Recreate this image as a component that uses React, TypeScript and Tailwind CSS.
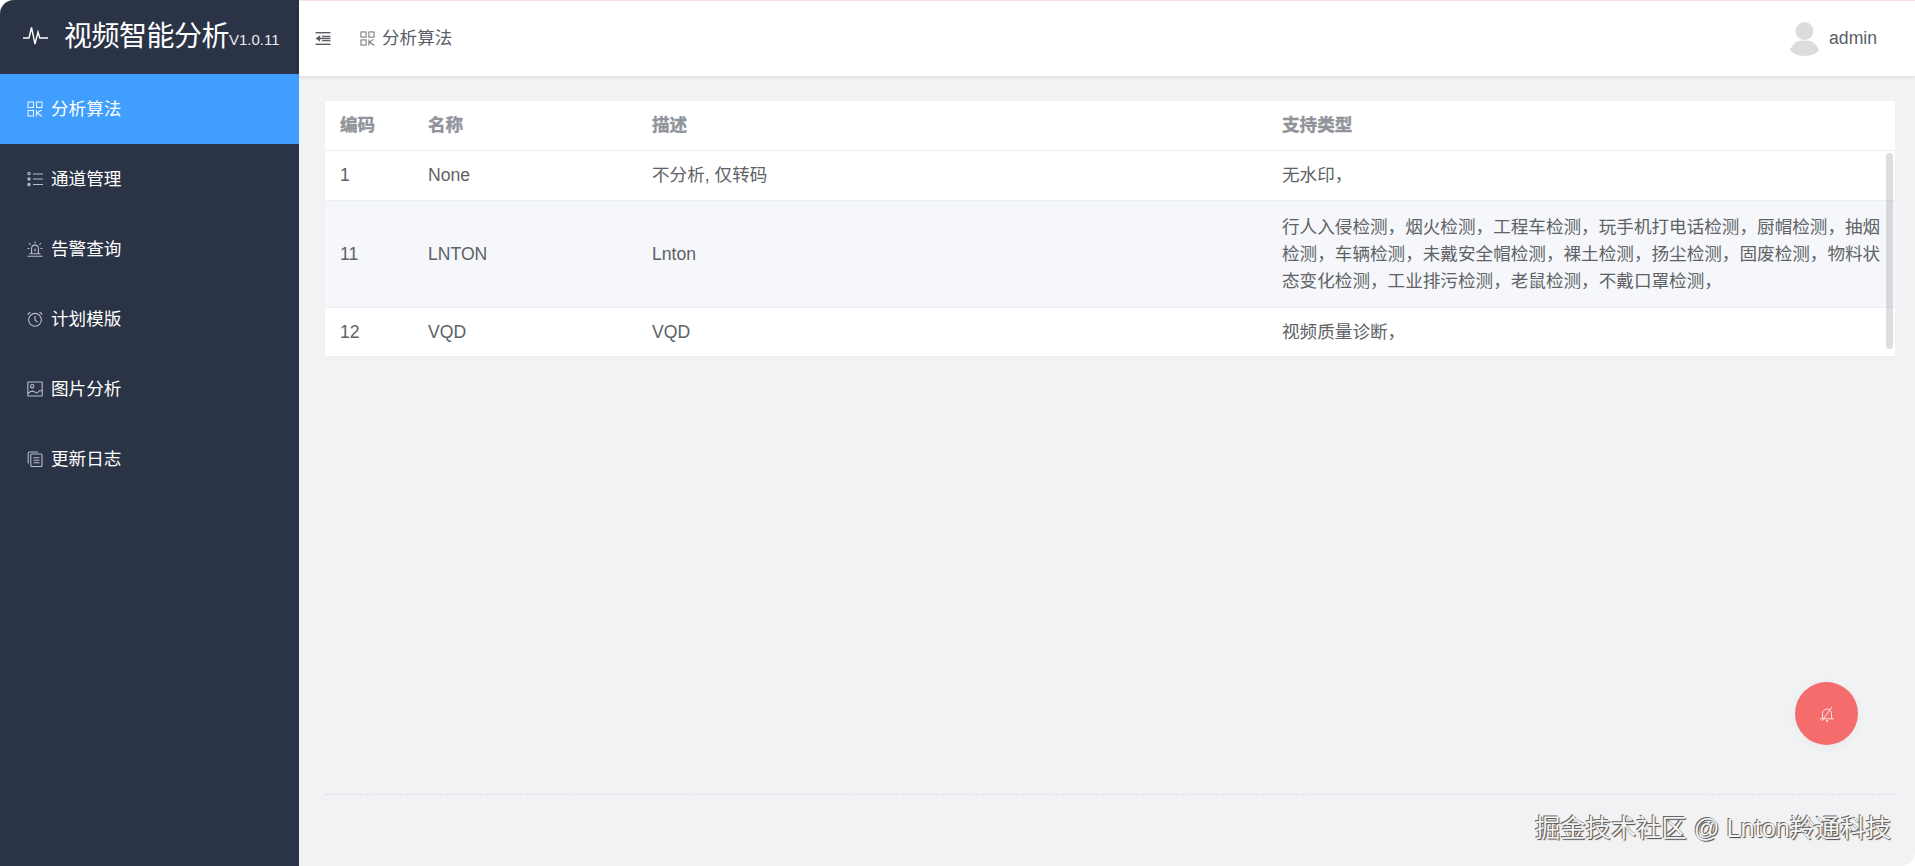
import type { ReactNode } from "react";

const font = "font-['Liberation_Sans','Noto_Sans_CJK_SC',sans-serif]";

function GridIcon({ className }: { className?: string }) {
  return (
    <svg viewBox="0 0 16 16" fill="none" stroke="currentColor" strokeWidth="1.1" className={className}>
      <rect x="1" y="1" width="5.5" height="5.5" />
      <rect x="9.5" y="1" width="5.5" height="5.5" />
      <rect x="1" y="9.5" width="5.5" height="5.5" />
      <path d="M9.5 9v6.5M9.5 12.2 14.5 9M10.5 12l4.5 3.5" />
    </svg>
  );
}

function ListIcon({ className }: { className?: string }) {
  return (
    <svg viewBox="0 0 16 16" fill="none" stroke="currentColor" strokeWidth="1.1" className={className}>
      <circle cx="2" cy="2.5" r="1.2" />
      <circle cx="2" cy="8" r="1.1" fill="currentColor" />
      <circle cx="2" cy="13.5" r="1.1" fill="currentColor" />
      <path d="M6 3h10M6 8h10M6 13.5h10" />
    </svg>
  );
}

function AlarmIcon({ className }: { className?: string }) {
  return (
    <svg viewBox="0 0 16 16" fill="none" stroke="currentColor" strokeWidth="1.1" className={className}>
      <path d="M4.6 12.5V7.5a3.4 3.4 0 0 1 6.8 0v5M2.500 12.800h11M.5 15.200h15M8 .5v2M2 2.200l1.500 1.500M14 2.200l-1.500 1.500M.5 7.500h2M13.500 7.500h2M8 7.500v3" />
    </svg>
  );
}

function ClockIcon({ className }: { className?: string }) {
  return (
    <svg viewBox="0 0 16 16" fill="none" stroke="currentColor" strokeWidth="1.1" className={className}>
      <circle cx="8" cy="8.800" r="6.400" />
      <path d="M8 5v4l2.600 2.200M.6 3.600 3.400 1M15.400 3.600 12.600 1" />
    </svg>
  );
}

function PictureIcon({ className }: { className?: string }) {
  return (
    <svg viewBox="0 0 16 16" fill="none" stroke="currentColor" strokeWidth="1.1" className={className}>
      <rect x=".8" y="1" width="14.400" height="14" rx=".5" />
      <circle cx="5.200" cy="5.200" r="1.700" />
      <path d="M1 12.500c2.500-2.600 4.500-3.200 6.500-1.600s3.200 1 4.200-.4 2.200-1.200 3.500.2" />
    </svg>
  );
}

function DocIcon({ className }: { className?: string }) {
  return (
    <svg viewBox="0 0 16 16" fill="none" stroke="currentColor" strokeWidth="1.1" className={className}>
      <path d="M1.200 12.500V2.600C1.200 1.500 1.800 1 2.800 1h8" />
      <rect x="3.800" y="3" width="11.200" height="12.500" rx="1" />
      <path d="M6.500 6.800h6M6.500 9.300h6M6.500 11.800h6" />
    </svg>
  );
}

function PulseIcon({ className }: { className?: string }) {
  return (
    <svg viewBox="0 0 25 20" fill="none" stroke="currentColor" strokeWidth="1.4" className={className}>
      <path d="M0 12H6L8.500 1.500 12 18l3-12 1.800 6H25" />
    </svg>
  );
}

function FoldIcon({ className }: { className?: string }) {
  return (
    <svg viewBox="0 0 16 14" fill="currentColor" className={className}>
      <rect x="0" y="0" width="16" height="1.500" />
      <rect x="7" y="4" width="9" height="1.500" />
      <rect x="7" y="8.500" width="9" height="1.500" />
      <rect x="0" y="12.500" width="16" height="1.500" />
      <path d="M0 7l5-3.400v6.800z" />
      <rect x="4" y="6.200" width="12" height="1.500" />
    </svg>
  );
}

function BellOffIcon({ className }: { className?: string }) {
  return (
    <svg viewBox="0 0 16 16" fill="none" stroke="currentColor" strokeWidth="1" className={className}>
      <path d="M3.500 12.500V7.500A4.500 4.500 0 0 1 8 3a4.500 4.500 0 0 1 4.500 4.500v5M1 12.800h14M3 15 13 .8" />
      <circle cx="8" cy="15" r=".8" fill="currentColor" />
    </svg>
  );
}

function MenuItem({ icon, label, active }: { icon: ReactNode; label: string; active?: boolean }) {
  return (
    <div className={`flex h-[70px] items-center pl-[27px] text-[17.6px] text-white ${active ? "bg-[#409eff]" : ""}`}>
      <span className={`mr-[8px] flex ${active ? "text-[#e3f0ff]" : "text-[#b8bfca]"}`}>{icon}</span>
      {label}
    </div>
  );
}

const rows = [
  { code: "1", name: "None", desc: "不分析, 仅转码", types: "无水印，", height: "h-[50px]", bg: "bg-white" },
  {
    code: "11",
    name: "LNTON",
    desc: "Lnton",
    types:
      "行人入侵检测，烟火检测，工程车检测，玩手机打电话检测，厨帽检测，抽烟检测，车辆检测，未戴安全帽检测，裸土检测，扬尘检测，固废检测，物料状态变化检测，工业排污检测，老鼠检测，不戴口罩检测，",
    height: "h-[107px]",
    bg: "bg-[#f5f7fa]",
  },
  { code: "12", name: "VQD", desc: "VQD", types: "视频质量诊断，", height: "h-[49px]", bg: "bg-white" },
];

const iconClass = "h-4 w-4";

export default function App() {
  return (
    <div className={`${font} flex h-[866px] w-[1915px] overflow-hidden bg-white`}>
      <aside className="h-full w-[299px] shrink-0 rounded-tl-[14px] bg-[#2b3346]">
        <div className="flex h-[74px] items-center pl-[23px] text-white">
          <PulseIcon className="mt-[-3px] h-[20px] w-[25px]" />
          <span className="ml-[16px] text-[28px] leading-none tracking-[-0.5px]">视频智能分析</span>
          <span className="mt-[4px] text-[15px] leading-none text-[#e8eaee]">V1.0.11</span>
        </div>
        <MenuItem active label="分析算法" icon={<GridIcon className={iconClass} />} />
        <MenuItem label="通道管理" icon={<ListIcon className={iconClass} />} />
        <MenuItem label="告警查询" icon={<AlarmIcon className={iconClass} />} />
        <MenuItem label="计划模版" icon={<ClockIcon className={iconClass} />} />
        <MenuItem label="图片分析" icon={<PictureIcon className={iconClass} />} />
        <MenuItem label="更新日志" icon={<DocIcon className={iconClass} />} />
      </aside>

      <main className="relative flex h-full min-w-0 flex-1 flex-col rounded-br-[14px] bg-[#f1f2f4]">
        <header className="flex h-[76px] shrink-0 items-center border-t border-[#fbdde6] bg-white pl-[16px] pr-[38px] text-[#5a5e66] shadow-[0_1px_4px_rgba(0,21,41,0.1)]">
          <FoldIcon className="h-[13px] w-[16px]" />
          <GridIcon className="ml-[29px] h-[15px] w-[15px] text-[#777]" />
          <span className="ml-[7px] text-[17.6px]">分析算法</span>
          <div className="ml-auto flex items-center">
            <svg viewBox="0 0 29 34" fill="#dcdcdc" className="h-[34px] w-[29px]">
              <circle cx="14.500" cy="9" r="9" />
              <path d="M14.500 18.500c-5 0-9 1-10.500 3.500L0 27c1 4 7 7 14.500 7S28 31 29 27l-4-5c-1.500-2.500-5.500-3.500-10.500-3.500z" />
            </svg>
            <span className="ml-[10px] text-[17.6px] text-[#5a5e66]">admin</span>
          </div>
        </header>

        <div className="flex min-h-0 flex-1 flex-col pl-[26px] pr-[20px]">
          <section className="relative mt-[25px] bg-white text-[17.6px] text-[#606266]">
            <div className="grid h-[50px] grid-cols-[88px_224px_630px_628px] items-center border-b border-[#ebeef5] font-bold text-[#909399] [-webkit-text-stroke:0.4px_#909399]">
              <div className="pl-[15px]">编码</div>
              <div className="pl-[15px]">名称</div>
              <div className="pl-[15px]">描述</div>
              <div className="pl-[15px]">支持类型</div>
            </div>
            {rows.map((row) => (
              <div
                key={row.code}
                className={`grid grid-cols-[88px_224px_630px_628px] items-center border-b border-[#ebeef5] last:border-b-0 ${row.height} ${row.bg}`}
              >
                <div className="pl-[15px]">{row.code}</div>
                <div className="pl-[15px]">{row.name}</div>
                <div className="pl-[15px]">{row.desc}</div>
                <div className="pl-[15px] pr-[14px] leading-[27px]">{row.types}</div>
              </div>
            ))}
            <div className="absolute right-[2px] top-[52px] bottom-[8px] w-[7px] rounded-[4px] bg-[#909399]/30" />
          </section>

          <footer className="mt-auto mb-[71px] border-t border-dashed border-[#dcdfe6]" />
        </div>

        <button className="absolute bottom-[121px] right-[57px] flex h-[63px] w-[63px] items-center justify-center rounded-full bg-[#f56c6c] text-[#fde2e2] shadow-[0_2px_12px_rgba(0,0,0,0.04)]">
          <BellOffIcon className="h-[16px] w-[16px]" />
        </button>
        <div className="absolute bottom-[25px] right-[24px] text-[25.3px] leading-none text-[#f4f4f4] [text-shadow:-1px_-1px_0_#666,1px_1px_1px_#444]">
          掘金技术社区 @ Lnton羚通科技
        </div>
      </main>
    </div>
  );
}
